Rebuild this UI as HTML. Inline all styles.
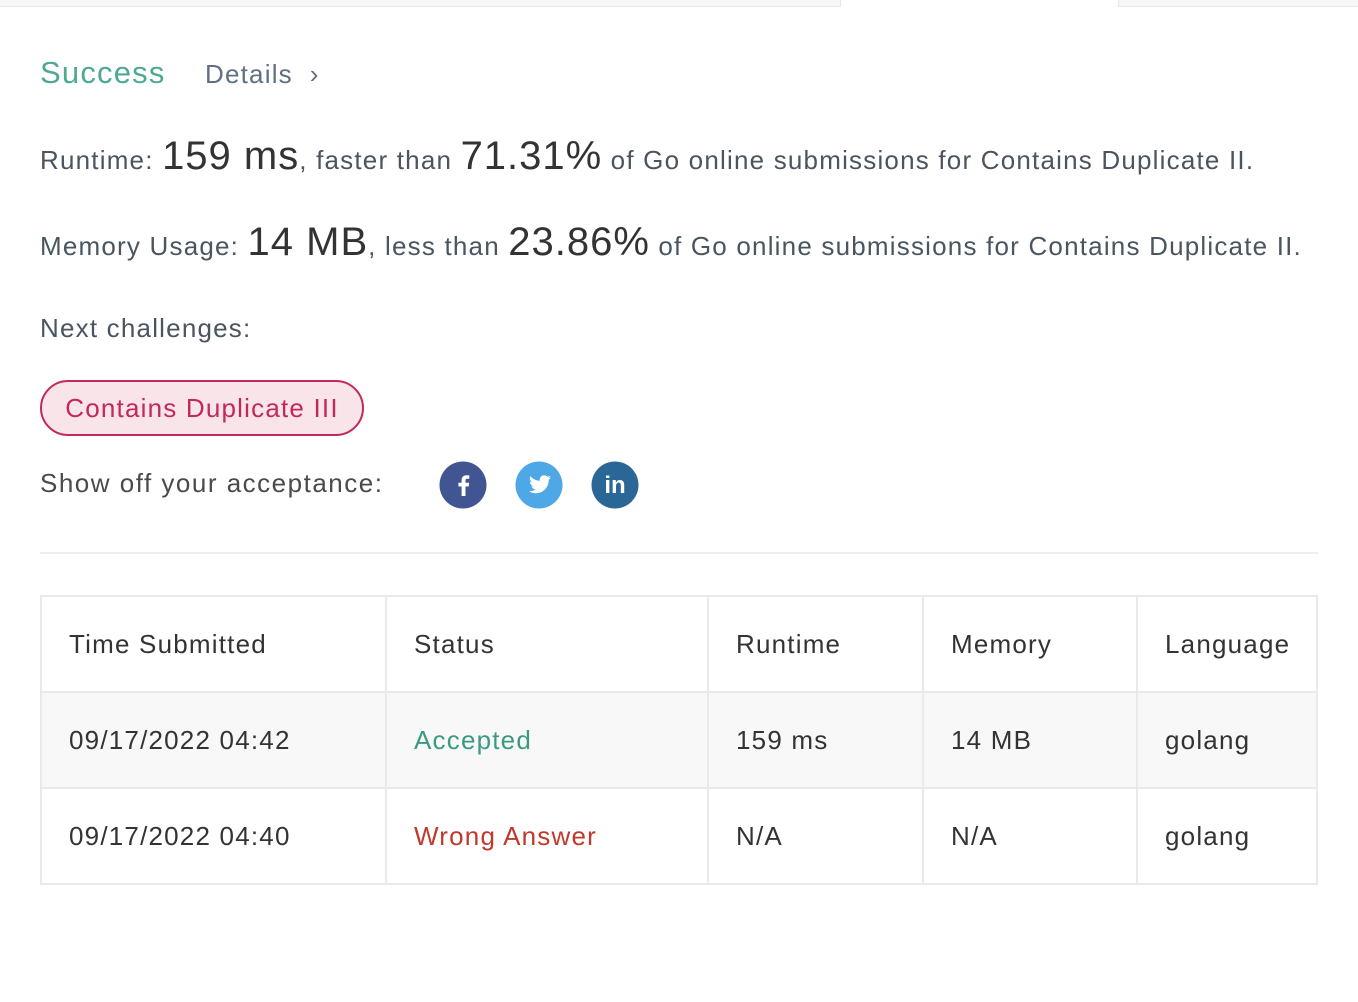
<!DOCTYPE html>
<html><head><meta charset="utf-8"><style>
body{margin:0;width:1358px;height:1002px;background:#fff;font-family:"Liberation Sans",sans-serif;color:#4a4a4a;position:relative;overflow:hidden;letter-spacing:1.2px}
.a{position:absolute;white-space:nowrap}
.tab{position:absolute;top:0;height:6px;background:#f7f7f7;border-bottom:1px solid #e8e8e8}
.big{font-size:40px;color:#333;letter-spacing:1px}
table{position:absolute;left:40px;top:595px;border-collapse:collapse;width:1278px;font-size:26px;color:#333}
td{border:2px solid #eaeaea;height:96px;padding:0 0 0 27px;box-sizing:border-box}
</style></head><body>
<div class="tab" style="left:0;width:840px;border-right:1px solid #e8e8e8"></div>
<div class="tab" style="left:1118px;width:240px;border-left:1px solid #e8e8e8"></div>
<div class="a" style="left:40px;top:55px;font-size:31px;color:#4fa895">Success</div>
<div class="a" style="left:205px;top:59px;font-size:26px;color:#607080">Details &nbsp;›</div>
<div class="a" style="left:40px;top:134px;font-size:26px;color:#4a5560">Runtime: <span class="big">159 ms</span>, faster than <span class="big">71.31%</span> of Go online submissions for Contains Duplicate II.</div>
<div class="a" style="left:40px;top:220px;font-size:26px;color:#4a5560">Memory Usage: <span class="big">14 MB</span>, less than <span class="big">23.86%</span> of Go online submissions for Contains Duplicate II.</div>
<div class="a" style="left:40px;top:313px;font-size:26px;color:#4a5560">Next challenges:</div>
<div class="a" style="left:40px;top:380px;width:320px;height:52px;border:2px solid #c0295a;border-radius:28px;background:#f9e4ea;color:#c0295a;font-size:26px;line-height:52px;text-align:center">Contains Duplicate III</div>
<div class="a" style="left:40px;top:468px;font-size:26px;color:#4a4a4a;letter-spacing:1.5px">Show off your acceptance:</div>
<svg class="a" style="left:439px;top:461px" width="200" height="48">
<circle cx="24" cy="24" r="23.5" fill="#405591"/><path d="M26.5 35V25.5h3.2l.5-3.7h-3.7v-2.3c0-1 .3-1.8 1.8-1.8h2v-3.3c-.4 0-1.5-.2-2.9-.2-2.9 0-4.8 1.8-4.8 5v2.6h-3.2v3.7h3.2V35z" fill="#fff"/>
<circle cx="100" cy="24" r="23.5" fill="#4ea8e6"/><path d="M112 16.5c-.8.4-1.700.6-2.600.7.9-.6 1.600-1.400 2-2.500-.9.5-1.900.9-2.900 1.100-.8-.9-2-1.500-3.300-1.500-2.500 0-4.500 2-4.500 4.500 0 .4 0 .7.1 1-3.800-.2-7.100-2-9.300-4.700-.4.7-.6 1.400-.6 2.300 0 1.600.8 2.900 2 3.800-.7 0-1.400-.2-2-.6v.1c0 2.200 1.600 4 3.600 4.400-.4.1-.8.2-1.200.2-.3 0-.6 0-.8-.1.6 1.800 2.200 3.100 4.200 3.100-1.500 1.200-3.500 1.900-5.600 1.900H90c2 1.300 4.400 2 6.900 2 8.300 0 12.800-6.900 12.800-12.800v-.6c.9-.6 1.700-1.400 2.300-2.300z" fill="#fff"/>
<circle cx="176" cy="24" r="23.5" fill="#2a6796"/><text x="176" y="32" font-family="Liberation Sans" font-weight="bold" font-size="24" fill="#fff" text-anchor="middle" letter-spacing="0">in</text>
</svg>
<div class="a" style="left:40px;top:552px;width:1278px;height:2px;background:#eeeeee"></div>
<table>
<tr><td style="width:345px">Time Submitted</td><td style="width:322px">Status</td><td style="width:215px">Runtime</td><td style="width:214px">Memory</td><td>Language</td></tr>
<tr style="background:#f8f8f8"><td>09/17/2022 04:42</td><td style="color:#3a9a83">Accepted</td><td>159 ms</td><td>14 MB</td><td>golang</td></tr>
<tr><td>09/17/2022 04:40</td><td style="color:#c0392b">Wrong Answer</td><td>N/A</td><td>N/A</td><td>golang</td></tr>
</table>
</body></html>
